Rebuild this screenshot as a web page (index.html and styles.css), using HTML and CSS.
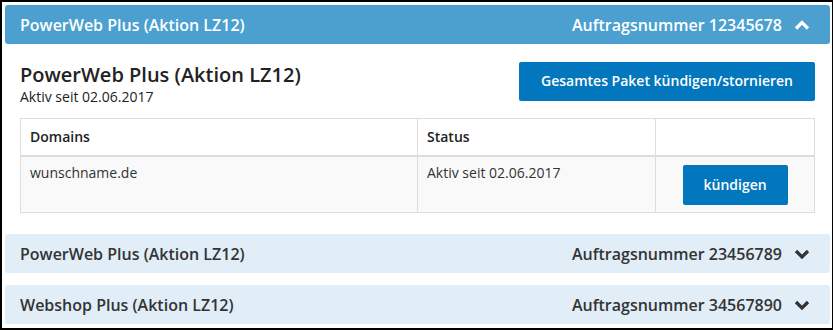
FILE: index.html
```html
<html>
  <head>
    <title>Meine Pakete</title>
    <link rel="stylesheet" href="styles.css">
  </head>
  <body>
    <div id="frame">
      <div class="order open">
        <div class="order-head">
          <span class="name">PowerWeb Plus (Aktion LZ12)</span>
          <span class="number">
            Auftragsnummer 12345678
            <svg class="chevron" width="16" height="10" viewBox="0 0 16 10">
              <polyline points="2,8.5 8,2.5 14,8.5" />
            </svg>
          </span>
        </div>
        <div class="order-body">
          <div class="package">
            <div class="package-info">
              <h2>PowerWeb Plus (Aktion LZ12)</h2>
              <div class="since">Aktiv seit 02.06.2017</div>
            </div>
            <button class="btn btn-wide">Gesamtes Paket kündigen/stornieren</button>
          </div>
          <table class="domains">
            <thead>
              <tr>
                <th class="col-domain">Domains</th>
                <th class="col-status">Status</th>
                <th class="col-action"></th>
              </tr>
            </thead>
            <tbody>
              <tr>
                <td>wunschname.de</td>
                <td>Aktiv seit 02.06.2017</td>
                <td class="action"><button class="btn">kündigen</button></td>
              </tr>
            </tbody>
          </table>
        </div>
      </div>

      <div class="order">
        <div class="order-head">
          <span class="name">PowerWeb Plus (Aktion LZ12)</span>
          <span class="number">
            Auftragsnummer 23456789
            <svg class="chevron" width="16" height="10" viewBox="0 0 16 10">
              <polyline points="2,2 8,8 14,2" />
            </svg>
          </span>
        </div>
      </div>

      <div class="order">
        <div class="order-head">
          <span class="name">Webshop Plus (Aktion LZ12)</span>
          <span class="number">
            Auftragsnummer 34567890
            <svg class="chevron" width="16" height="10" viewBox="0 0 16 10">
              <polyline points="2,2 8,8 14,2" />
            </svg>
          </span>
        </div>
      </div>
    </div>
  </body>
</html>
```

FILE: styles.css
```css
body {margin: 0; font-family: "Open Sans", "Liberation Sans", sans-serif; font-size: 14px; line-height: 20px; color: #333;}

#frame {
  width: 833px;
  height: 330px;
  box-sizing: border-box;
  border: 2px solid #000;
  border-right-width: 1px;
  padding: 3px 2px 0 3px;
  overflow: hidden;
}

.order {margin-bottom: 12px;}

.order-head {
  display: flex;
  justify-content: space-between;
  align-items: center;
  height: 39px;
  padding: 0 20px 0 15px;
  background-color: #e1eef8;
  border-radius: 3px;
  font-size: 16px;
  font-weight: 600;
  color: #333;
}
.order.open .order-head {background-color: #4ba0d0; color: #fff;}

.number {display: flex; align-items: center;}
.chevron {margin-left: 12px;}
.chevron polyline {fill: none; stroke: currentColor; stroke-width: 3.2;}

.order-body {padding: 18px 15px 9px 15px;}

.package {display: flex; justify-content: space-between; align-items: flex-start;}
.package h2 {margin: 1px 0 0 0; font-size: 20px; line-height: 24px; font-weight: 600; color: #222;}
.since {color: #222;}

.btn {
  font-family: inherit;
  font-size: 14px;
  line-height: 20px;
  font-weight: 600;
  color: #fff;
  background-color: #0277bd;
  border: 0;
  border-radius: 2px;
  padding: 10px 21px;
}
.btn-wide {padding: 9px 22px 10px 22px;}

.domains {
  width: 100%;
  margin-top: 11px;
  border-collapse: collapse;
  border: 1px solid #ddd;
  font-size: 14px;
  line-height: 20px;
  color: #333;
}
.domains th, .domains td {
  border: 1px solid #ddd;
  padding: 8px 9px;
  text-align: left;
  vertical-align: top;
}
.domains th {font-weight: 600; border-bottom-width: 2px; color: #222;}
.domains td {background-color: #f9f9f9; padding-top: 6px;}
.domains td.action {text-align: center; padding: 8px 9px 7px 9px;}
.col-domain {width: 50%;}
.col-status {width: 30%;}
.col-action {width: 20%;}
```
